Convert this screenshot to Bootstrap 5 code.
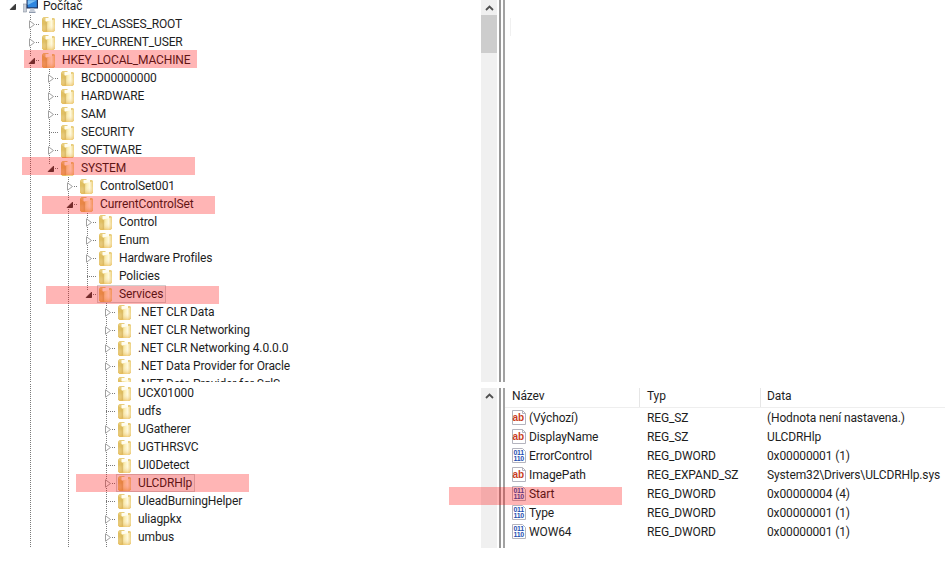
<!DOCTYPE html>
<html lang="cs">
<head>
<meta charset="utf-8">
<title>Registry</title>
<link href="https://cdn.jsdelivr.net/npm/bootstrap@5.3.0/dist/css/bootstrap.min.css" rel="stylesheet">
<style>
html,body{margin:0;background:#fff;overflow:hidden}
.shot{width:945px;height:570px;font:12px/18px Roboto,"Noto Sans",sans-serif;letter-spacing:-.13px;color:#1e1e1e;position:relative}
.pane-top{height:382px}
.pane-bot{height:164px;margin-top:2px}
.tree{width:481px;padding-left:1px}
.tree-up{margin-top:-3px}
.tr{height:18px;flex:none}
.tc{width:19px;height:18px;flex:none;display:flex;align-items:center;justify-content:center;padding-left:3px;
  background-repeat:no-repeat}
.gv{background-image:repeating-linear-gradient(to bottom,#7a7a7a 0 1px,transparent 1px 2px);background-size:1px 18px;background-position:10px 0}
.gt{background-image:repeating-linear-gradient(to bottom,#7a7a7a 0 1px,transparent 1px 2px),repeating-linear-gradient(to right,#7a7a7a 0 1px,transparent 1px 2px);background-size:1px 18px,12px 1px;background-position:10px 0,10px 9px}
.gl{background-image:repeating-linear-gradient(to bottom,#7a7a7a 0 1px,transparent 1px 2px),repeating-linear-gradient(to right,#7a7a7a 0 1px,transparent 1px 2px);background-size:1px 9px,12px 1px;background-position:10px 0,10px 9px}
.tc svg{width:9px;height:9px;background:#fff}
.ib{display:flex;align-items:center;height:18px}
.fo{width:13px;height:16px;margin:0 7px 0 3px;flex:none}
.foc{width:15px;height:14px;margin:0 5px 0 3px;flex:none}
.sel-box{outline:1px solid rgba(110,110,110,.28);outline-offset:-1px;margin-left:1px;padding-right:3px;background:#f7f7f7}
.sel-box .fo{margin-left:2px}
.cut-text{height:8px;overflow:hidden;align-self:flex-start}
.sb{width:16px;background:#f0f0f0;flex:none}
.sb-btn{height:15px;display:flex;align-items:center;justify-content:center}
.sb-btn svg{width:9px;height:6px}
.sb-thumb{height:38px;background:#cdcdcd}
.spl{width:6px;margin-left:2px;border-left:2px solid #989898;border-right:2px solid #a2a2a2;flex:none}
.right{margin-top:4px}
.caret{width:1px;height:18px;background:#f0f0f0;margin:18px 0 0 5px}
.lst{width:440px}
.lh{height:20px;border-bottom:1px solid #eeeeee}
.lr{height:19px}
.cn{width:135px;padding-left:7px;flex:none}
.ct{width:121px;padding-left:7px;flex:none}
.cd{padding-left:6px;white-space:nowrap}
.lh .cn,.lh .ct{border-right:1px solid #e6e6e6;height:19px}
.lh>div{line-height:17px}
.rg{width:14px;height:15px;margin-right:3px;flex:none}
.hl{position:absolute;width:173px;height:18px;background:rgba(255,0,0,.29);pointer-events:none}
.hl-a{left:24px;top:50px}
.hl-b{left:22px;top:157px}
.hl-c{left:42px;top:196px}
.hl-d{left:46px;top:286px}
.hl-e{left:76px;top:474px}
.hl-f{left:449px;top:487px}
</style>
</head>
<body>
<svg width="0" height="0" class="d-block" aria-hidden="true">
<defs>
<linearGradient id="gf" x1="0" x2="1" y1="0" y2="0"><stop offset="0" stop-color="#e6c870"/><stop offset=".3" stop-color="#fbeeb4"/><stop offset=".62" stop-color="#fff9dc"/><stop offset="1" stop-color="#eccf7c"/></linearGradient>
<linearGradient id="gb" x1="0" x2="0" y1="0" y2="1"><stop offset="0" stop-color="#fff" stop-opacity="0"/><stop offset="1" stop-color="#e8b850" stop-opacity=".65"/></linearGradient>
<symbol id="fo" viewBox="0 0 13 16"><path d="M0 2.500 1.500 1H6l1 1h5l1 1v12H1l-1-1z" fill="#e8cd7c"/><path d="M3.500 2h6.500v11H3.500z" fill="#fffdf0"/><path d="M0 3 4 5.500V16H1.500L0 14.500z" fill="#e0bf62"/><path d="M4 5.500 13 3.500v11L11.500 16H4z" fill="url(#gf)"/><path d="M0 8h13v6.500L11.500 16h-10L0 14.500z" fill="url(#gb)"/><path d="M4.300 6V15.500" stroke="#c9a54a" stroke-width=".6"/></symbol>
<symbol id="ac" viewBox="0 0 9 9"><path d="M2.500.8 7.500 4.500 2.500 8.200z" fill="#fff" stroke="#a0a0a0"/></symbol>
<symbol id="ao" viewBox="0 0 9 9"><path d="M7.500 2.200V7.500H2.200z" fill="#3c3c3c" stroke="#3c3c3c"/></symbol>
<symbol id="pc" viewBox="0 0 15 14"><path d="M0 5h3.500v8H0z" fill="#c9ced6" stroke="#8a94a3" stroke-width=".6"/><path d="M3.500 0H15v9.500H3.500z" fill="#20335e"/><path d="M4.700 1.200h9.100v7.100H4.700z" fill="#2f86e0"/><path d="M4.700 1.200h9.100L4.700 6z" fill="#7cc0f5"/><path d="M7.500 9.500h3.500l.8 2.500H6.700z" fill="#c4ccd8"/><path d="M6 12.500h6.500V14H6z" fill="#8f9bae"/></symbol>
<symbol id="rs" viewBox="0 0 14 15"><path d="M.5.500H10.500L13.500 3.500V14.500H.5z" fill="#fff" stroke="#b4b4be"/><path d="M10.500.500V3.500H13.500" fill="none" stroke="#b4b4be"/><text x=".6" y="10.800" font-family="Liberation Sans, sans-serif" font-size="10" font-weight="700" fill="#c8401f">ab</text></symbol>
<symbol id="rb" viewBox="0 0 14 15"><path d="M.5.500H10.500L13.500 3.500V14.500H.5z" fill="#fff" stroke="#b4b4be"/><text x="1.600" y="7" font-family="Liberation Sans, sans-serif" font-size="7" font-weight="700" letter-spacing="-.4" fill="#1f4fb0">011</text><text x="1.600" y="13.200" font-family="Liberation Sans, sans-serif" font-size="7" font-weight="700" letter-spacing="-.4" fill="#1f4fb0">110</text></symbol>
<symbol id="up" viewBox="0 0 9 6"><path d="M1 5 4.500 1.500 8 5" fill="none" stroke="#505050" stroke-width="1.800"/></symbol>
</defs>
</svg>

<div class="shot">
  <div class="d-flex pane-top overflow-hidden">
    <div class="tree tree-up text-nowrap">
      <div class="d-flex align-items-center tr"><span class="tc"><svg><use href="#ao"/></svg></span><svg class="foc"><use href="#pc"/></svg><span>Počítač</span></div>
      <div class="d-flex align-items-center tr"><span class="tc"></span><span class="tc gt"><svg><use href="#ac"/></svg></span><svg class="fo"><use href="#fo"/></svg><span>HKEY_CLASSES_ROOT</span></div>
      <div class="d-flex align-items-center tr"><span class="tc"></span><span class="tc gt"><svg><use href="#ac"/></svg></span><svg class="fo"><use href="#fo"/></svg><span>HKEY_CURRENT_USER</span></div>
      <div class="d-flex align-items-center tr"><span class="tc"></span><span class="tc gt"><svg><use href="#ao"/></svg></span><svg class="fo"><use href="#fo"/></svg><span>HKEY_LOCAL_MACHINE</span></div>
      <div class="d-flex align-items-center tr"><span class="tc"></span><span class="tc gv"></span><span class="tc gt"><svg><use href="#ac"/></svg></span><svg class="fo"><use href="#fo"/></svg><span>BCD00000000</span></div>
      <div class="d-flex align-items-center tr"><span class="tc"></span><span class="tc gv"></span><span class="tc gt"><svg><use href="#ac"/></svg></span><svg class="fo"><use href="#fo"/></svg><span>HARDWARE</span></div>
      <div class="d-flex align-items-center tr"><span class="tc"></span><span class="tc gv"></span><span class="tc gt"><svg><use href="#ac"/></svg></span><svg class="fo"><use href="#fo"/></svg><span>SAM</span></div>
      <div class="d-flex align-items-center tr"><span class="tc"></span><span class="tc gv"></span><span class="tc gt"></span><svg class="fo"><use href="#fo"/></svg><span>SECURITY</span></div>
      <div class="d-flex align-items-center tr"><span class="tc"></span><span class="tc gv"></span><span class="tc gt"><svg><use href="#ac"/></svg></span><svg class="fo"><use href="#fo"/></svg><span>SOFTWARE</span></div>
      <div class="d-flex align-items-center tr"><span class="tc"></span><span class="tc gv"></span><span class="tc gl"><svg><use href="#ao"/></svg></span><svg class="fo"><use href="#fo"/></svg><span>SYSTEM</span></div>
      <div class="d-flex align-items-center tr"><span class="tc"></span><span class="tc gv"></span><span class="tc"></span><span class="tc gt"><svg><use href="#ac"/></svg></span><svg class="fo"><use href="#fo"/></svg><span>ControlSet001</span></div>
      <div class="d-flex align-items-center tr"><span class="tc"></span><span class="tc gv"></span><span class="tc"></span><span class="tc gt"><svg><use href="#ao"/></svg></span><svg class="fo"><use href="#fo"/></svg><span>CurrentControlSet</span></div>
      <div class="d-flex align-items-center tr"><span class="tc"></span><span class="tc gv"></span><span class="tc"></span><span class="tc gv"></span><span class="tc gt"><svg><use href="#ac"/></svg></span><svg class="fo"><use href="#fo"/></svg><span>Control</span></div>
      <div class="d-flex align-items-center tr"><span class="tc"></span><span class="tc gv"></span><span class="tc"></span><span class="tc gv"></span><span class="tc gt"><svg><use href="#ac"/></svg></span><svg class="fo"><use href="#fo"/></svg><span>Enum</span></div>
      <div class="d-flex align-items-center tr"><span class="tc"></span><span class="tc gv"></span><span class="tc"></span><span class="tc gv"></span><span class="tc gt"><svg><use href="#ac"/></svg></span><svg class="fo"><use href="#fo"/></svg><span>Hardware Profiles</span></div>
      <div class="d-flex align-items-center tr"><span class="tc"></span><span class="tc gv"></span><span class="tc"></span><span class="tc gv"></span><span class="tc gt"></span><svg class="fo"><use href="#fo"/></svg><span>Policies</span></div>
      <div class="d-flex align-items-center tr"><span class="tc"></span><span class="tc gv"></span><span class="tc"></span><span class="tc gv"></span><span class="tc gl"><svg><use href="#ao"/></svg></span><span class="ib sel-box"><svg class="fo"><use href="#fo"/></svg><span>Services</span></span></div>
      <div class="d-flex align-items-center tr"><span class="tc"></span><span class="tc gv"></span><span class="tc"></span><span class="tc gv"></span><span class="tc"></span><span class="tc gt"><svg><use href="#ac"/></svg></span><svg class="fo"><use href="#fo"/></svg><span>.NET CLR Data</span></div>
      <div class="d-flex align-items-center tr"><span class="tc"></span><span class="tc gv"></span><span class="tc"></span><span class="tc gv"></span><span class="tc"></span><span class="tc gt"><svg><use href="#ac"/></svg></span><svg class="fo"><use href="#fo"/></svg><span>.NET CLR Networking</span></div>
      <div class="d-flex align-items-center tr"><span class="tc"></span><span class="tc gv"></span><span class="tc"></span><span class="tc gv"></span><span class="tc"></span><span class="tc gt"><svg><use href="#ac"/></svg></span><svg class="fo"><use href="#fo"/></svg><span>.NET CLR Networking 4.0.0.0</span></div>
      <div class="d-flex align-items-center tr"><span class="tc"></span><span class="tc gv"></span><span class="tc"></span><span class="tc gv"></span><span class="tc"></span><span class="tc gt"><svg><use href="#ac"/></svg></span><svg class="fo"><use href="#fo"/></svg><span>.NET Data Provider for Oracle</span></div>
      <div class="d-flex align-items-center tr"><span class="tc"></span><span class="tc gv"></span><span class="tc"></span><span class="tc gv"></span><span class="tc"></span><span class="tc gt"></span><svg class="fo"><use href="#fo"/></svg><span class="cut-text">.NET Data Provider for SqlS</span></div>
    </div>
    <div class="sb"><div class="sb-btn"><svg><use href="#up"/></svg></div><div class="sb-thumb"></div></div>
    <div class="spl"></div>
    <div class="caret"></div>
  </div>

  <div class="d-flex pane-bot overflow-hidden">
    <div class="tree text-nowrap">
      <div class="d-flex align-items-center tr"><span class="tc"></span><span class="tc gv"></span><span class="tc"></span><span class="tc gv"></span><span class="tc"></span><span class="tc gt"><svg><use href="#ac"/></svg></span><svg class="fo"><use href="#fo"/></svg><span>UCX01000</span></div>
      <div class="d-flex align-items-center tr"><span class="tc"></span><span class="tc gv"></span><span class="tc"></span><span class="tc gv"></span><span class="tc"></span><span class="tc gt"></span><svg class="fo"><use href="#fo"/></svg><span>udfs</span></div>
      <div class="d-flex align-items-center tr"><span class="tc"></span><span class="tc gv"></span><span class="tc"></span><span class="tc gv"></span><span class="tc"></span><span class="tc gt"><svg><use href="#ac"/></svg></span><svg class="fo"><use href="#fo"/></svg><span>UGatherer</span></div>
      <div class="d-flex align-items-center tr"><span class="tc"></span><span class="tc gv"></span><span class="tc"></span><span class="tc gv"></span><span class="tc"></span><span class="tc gt"><svg><use href="#ac"/></svg></span><svg class="fo"><use href="#fo"/></svg><span>UGTHRSVC</span></div>
      <div class="d-flex align-items-center tr"><span class="tc"></span><span class="tc gv"></span><span class="tc"></span><span class="tc gv"></span><span class="tc"></span><span class="tc gt"></span><svg class="fo"><use href="#fo"/></svg><span>UI0Detect</span></div>
      <div class="d-flex align-items-center tr"><span class="tc"></span><span class="tc gv"></span><span class="tc"></span><span class="tc gv"></span><span class="tc"></span><span class="tc gt"><svg><use href="#ac"/></svg></span><span class="ib sel-box"><svg class="fo"><use href="#fo"/></svg><span>ULCDRHlp</span></span></div>
      <div class="d-flex align-items-center tr"><span class="tc"></span><span class="tc gv"></span><span class="tc"></span><span class="tc gv"></span><span class="tc"></span><span class="tc gt"></span><svg class="fo"><use href="#fo"/></svg><span>UleadBurningHelper</span></div>
      <div class="d-flex align-items-center tr"><span class="tc"></span><span class="tc gv"></span><span class="tc"></span><span class="tc gv"></span><span class="tc"></span><span class="tc gt"><svg><use href="#ac"/></svg></span><svg class="fo"><use href="#fo"/></svg><span>uliagpkx</span></div>
      <div class="d-flex align-items-center tr"><span class="tc"></span><span class="tc gv"></span><span class="tc"></span><span class="tc gv"></span><span class="tc"></span><span class="tc gt"><svg><use href="#ac"/></svg></span><svg class="fo"><use href="#fo"/></svg><span>umbus</span></div>
      <div class="d-flex align-items-center tr"><span class="tc"></span><span class="tc gv"></span><span class="tc"></span><span class="tc gv"></span><span class="tc"></span><span class="tc gv"></span></div>
    </div>
    <div class="sb right"><div class="sb-btn"><svg><use href="#up"/></svg></div></div>
    <div class="spl right"></div>
    <div class="lst right">
      <div class="d-flex lh"><div class="cn">Název</div><div class="ct">Typ</div><div class="cd">Data</div></div>
      <div class="d-flex align-items-center lr"><div class="cn d-flex align-items-center"><svg class="rg"><use href="#rs"/></svg><span>(Výchozí)</span></div><div class="ct">REG_SZ</div><div class="cd">(Hodnota není nastavena.)</div></div>
      <div class="d-flex align-items-center lr"><div class="cn d-flex align-items-center"><svg class="rg"><use href="#rs"/></svg><span>DisplayName</span></div><div class="ct">REG_SZ</div><div class="cd">ULCDRHlp</div></div>
      <div class="d-flex align-items-center lr"><div class="cn d-flex align-items-center"><svg class="rg"><use href="#rb"/></svg><span>ErrorControl</span></div><div class="ct">REG_DWORD</div><div class="cd">0x00000001 (1)</div></div>
      <div class="d-flex align-items-center lr"><div class="cn d-flex align-items-center"><svg class="rg"><use href="#rs"/></svg><span>ImagePath</span></div><div class="ct">REG_EXPAND_SZ</div><div class="cd">System32\Drivers\ULCDRHlp.sys</div></div>
      <div class="d-flex align-items-center lr"><div class="cn d-flex align-items-center"><svg class="rg"><use href="#rb"/></svg><span>Start</span></div><div class="ct">REG_DWORD</div><div class="cd">0x00000004 (4)</div></div>
      <div class="d-flex align-items-center lr"><div class="cn d-flex align-items-center"><svg class="rg"><use href="#rb"/></svg><span>Type</span></div><div class="ct">REG_DWORD</div><div class="cd">0x00000001 (1)</div></div>
      <div class="d-flex align-items-center lr"><div class="cn d-flex align-items-center"><svg class="rg"><use href="#rb"/></svg><span>WOW64</span></div><div class="ct">REG_DWORD</div><div class="cd">0x00000001 (1)</div></div>
    </div>
  </div>

  <div class="hl hl-a"></div>
  <div class="hl hl-b"></div>
  <div class="hl hl-c"></div>
  <div class="hl hl-d"></div>
  <div class="hl hl-e"></div>
  <div class="hl hl-f"></div>
</div>
<script src="https://cdn.jsdelivr.net/npm/bootstrap@5.3.0/dist/js/bootstrap.bundle.min.js"></script>
</body>
</html>
